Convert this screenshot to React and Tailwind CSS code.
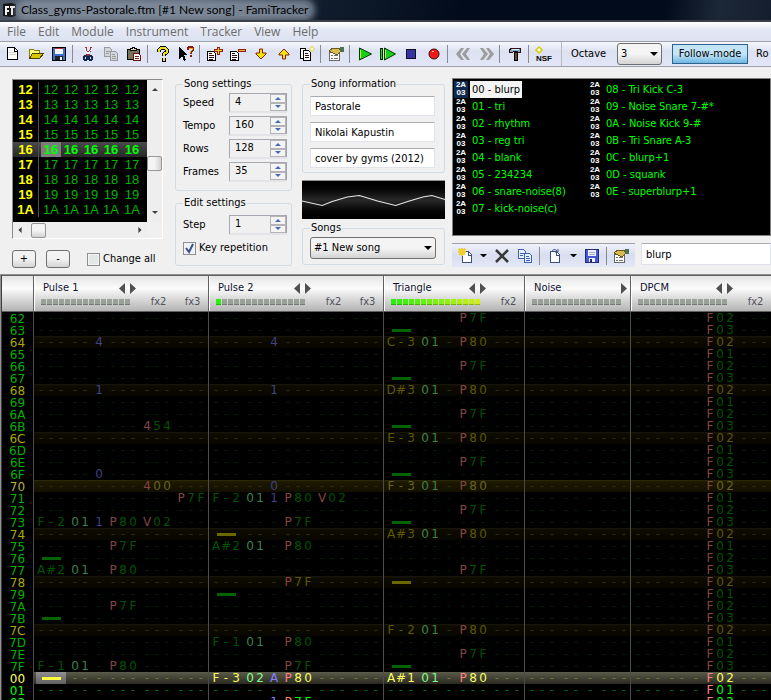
import React from "react";
import clsx from "clsx";

const MENU = ["File", "Edit", "Module", "Instrument", "Tracker", "View", "Help"];

/* ---------- toolbar icons ---------- */

const Icon = ({ children }) => (
  <svg width="16" height="16" viewBox="0 0 16 16" fill="none" shapeRendering="crispEdges" aria-hidden="true">
    {children}
  </svg>
);

const NewIcon = () => (
  <Icon>
    <path d="M2.5 1.5h7l3 3v9h-10z" fill="#fff" stroke="#000" />
    <path d="M9.5 2v3h3" stroke="#000" />
    <path d="M4 6.5h7M4 8.5h7" stroke="#d8d8c8" />
  </Icon>
);

const OpenIcon = () => (
  <Icon>
    <path d="M1.5 12.5v-9h4l1 1h5v3" fill="#ffff80" stroke="#808000" />
    <path d="M1.5 12.5l3-5h11l-4 5z" fill="#d8c800" stroke="#4a4000" />
  </Icon>
);

const SaveIcon = () => (
  <Icon>
    <path d="M1.5 1.5h13v13h-13z" fill="#3a6fd0" stroke="#000" />
    <path d="M4 2h8v6H4z" fill="#f4f4f4" />
    <path d="M4 2h8v1H4z" fill="#c03030" />
    <path d="M4 10h8v4H4z" fill="#222" />
    <path d="M9 11h2v3H9z" fill="#fff" />
  </Icon>
);

const CutIcon = () => (
  <Icon>
    <path d="M5.5 1v3l4 6M10.5 1v3l-4 6" stroke="#a03030" strokeWidth="2" />
    <path d="M5 2v2l3 4M11 2v2L8 8" stroke="#fff" />
    <circle cx="5.5" cy="12" r="2" stroke="#102850" strokeWidth="2" />
    <circle cx="10.5" cy="12" r="2" stroke="#102850" strokeWidth="2" />
  </Icon>
);

const CopyIcon = ({ line = "#9a9a9a", fill = "#d4d6de" }) => (
  <Icon>
    <path d="M1.5 1.5h5l2 2v7h-7z" fill={fill} stroke={line} />
    <path d="M3 5.5h4M3 7.5h3" stroke={line} />
    <path d="M7.5 5.5h5l2 2v7h-7z" fill={fill} stroke={line} />
    <path d="M9 8.5h3M9 10.5h4M9 12.5h4" stroke={line} />
  </Icon>
);

const PasteIcon = () => (
  <Icon>
    <path d="M1.5 3.5h12v10h-12z" fill="#77745c" stroke="#000" />
    <path d="M4.5 4.5v-2h2v-1h2v1h2v2z" fill="#e0e0a0" stroke="#000" />
    <path d="M7.5 7.5h5l2 2v5h-7z" fill="#fff" stroke="#701010" />
    <path d="M9 10.5h4M9 12.5h4" stroke="#802020" />
  </Icon>
);

const HelpIcon = () => (
  <Icon>
    <path d="M4 6V4l2-2h4l2 2v2L9 8v2" stroke="#000" strokeWidth="4" />
    <path d="M4 6V4l2-2h4l2 2v2L9 8v2" stroke="#f0e020" strokeWidth="2" />
    <path d="M7 12h4v4H7z" fill="#000" />
    <path d="M8 12h2v3H8z" fill="#f0e020" />
  </Icon>
);

const ContextHelpIcon = () => (
  <Icon>
    <path d="M1 1v12l3-3 2 5 2-1-2-5h4z" fill="#000" />
    <path d="M10 4V2l1-1h3l1 1v2l-2 2v2M13 9v2" stroke="#802010" strokeWidth="2" />
    <path d="M11 3V2h3v2l-2 2v1" stroke="#f0a030" />
  </Icon>
);

const FrameIcon = ({ minus }) => (
  <Icon>
    <path d="M.5 5.5h6l2 2v7h-8z" fill="#fff" stroke="#000" />
    <path d="M2 7.5h3M2 9.5h5M2 11.5h5M2 13.5h4" stroke="#301010" />
    {minus ? (
      <path d="M8.5 3.5h7v2h-7z" fill="#f0b020" stroke="#902010" />
    ) : (
      <path d="M10.5 1.5h2v2h3v2h-3v3h-2v-3h-3v-2h3z" fill="#f0d020" stroke="#902010" />
    )}
  </Icon>
);

const ArrowIcon = ({ up }) => (
  <Icon>
    <path
      d={up ? "M8 3l5 5v1H9.5v4h-3V9H3V8z" : "M8 13l5-5V7H9.5V3h-3v4H3v1z"}
      fill="#f4e400"
      stroke="#802010"
      shapeRendering="auto"
    />
  </Icon>
);

const DuplicateIcon = () => (
  <Icon>
    <path d="M1.5 2.5h5v10h-5z" fill="#fff" stroke="#000" />
    <path d="M4.5 4.5h5l2 2v8h-7z" fill="#fff" stroke="#000" />
    <path d="M6 7.5h3M6 9.5h4M6 11.5h4" stroke="#301010" />
    <path d="M13 .5L15.500 3 13 5.500 10.500 3z" fill="#fff" stroke="#d8cc00" shapeRendering="auto" />
  </Icon>
);

const PropertiesIcon = () => (
  <Icon>
    <path d="M1.5 6.5h10v8h-10z" fill="#fff" stroke="#686868" />
    <path d="M3 9.5h2M6 9.5h4M3 12.5h2M6 12.5h4" stroke="#707070" />
    <path d="M1 5l4-3h6l2 3-3 3H7l-2-1z" fill="#d8bc50" stroke="#6a5a20" />
    <path d="M12 1h4v5h-4z" fill="#4c7050" />
  </Icon>
);

const PlayIcon = ({ bar }) => (
  <Icon>
    {bar && <path d="M.5 2.5h2v11h-2z" fill="#20d820" stroke="#003000" />}
    <path d={bar ? "M4.5 2v12L15.5 8z" : "M2.5 2v12L14.5 8z"} fill="#18d018" stroke="#003800" shapeRendering="auto" />
    <path d={bar ? "M5.5 4v8" : "M3.5 4v8"} stroke="#c0f040" />
  </Icon>
);

const StopIcon = () => (
  <Icon>
    <path d="M3.5 3.5h9v9h-9z" fill="#3434a4" stroke="#101020" />
  </Icon>
);

const RecordIcon = () => (
  <Icon>
    <circle cx="8" cy="8" r="5" fill="#f01818" stroke="#400808" shapeRendering="auto" />
    <path d="M6 5h2v1H6z" fill="#ffb0b0" />
  </Icon>
);

const SkipIcon = ({ back }) => (
  <Icon>
    <path
      d="M2 2h3l5 6-5 6H2l4-6zM8 2h3l5 6-5 6H8l4-6z"
      fill="#9c9c9c"
      transform={back ? "matrix(-1 0 0 1 17 0)" : undefined}
      shapeRendering="auto"
    />
  </Icon>
);

const HammerIcon = () => (
  <Icon>
    <path d="M2.5 3.5l2-1h9v4h-3v-1h-4l-1 1h-3z" fill="#7ba8cc" stroke="#301010" />
    <path d="M7.5 6.5h3v8h-3z" fill="#704030" stroke="#000" />
    <path d="M5 3.5h7" stroke="#e0f0ff" />
  </Icon>
);

const NsfIcon = () => (
  <svg width="18" height="16" viewBox="0 0 18 16" fill="none" aria-hidden="true">
    <path d="M4 1l3 3-3 3-3-3z" fill="#fff" stroke="#d8cc00" strokeWidth="1.5" />
    <text x="1" y="15" fontFamily="Liberation Sans" fontSize="8" fontWeight="bold" fill="#000">
      NSF
    </text>
  </svg>
);

const PageIcon = ({ mark }) => (
  <Icon>
    <path d="M4.5 3.5h6l3 3v8h-9z" fill="#fff" stroke="#3a5078" />
    <path d="M10.5 4v3h3" stroke="#3a5078" />
    {mark === "new" ? (
      <path d="M4 0v8M0 4h8M1 1l6 6M7 1L1 7" stroke="#f0d030" strokeWidth="1.5" />
    ) : (
      <path d="M6 4c0-3 4-3 5-1M12 1v3H9" stroke="#3a5078" shapeRendering="auto" />
    )}
  </Icon>
);

const DeleteIcon = () => (
  <Icon>
    <path d="M2 2l12 12M14 2L2 14" stroke="#383838" strokeWidth="2.5" shapeRendering="auto" />
  </Icon>
);

const FloppyIcon = () => (
  <Icon>
    <path d="M1.5 1.5h13v13h-13z" fill="#4858d0" stroke="#202878" />
    <path d="M4 2h8v6H4zM5 10h6v4H5z" fill="#f0f2ff" />
    <path d="M6 11h2v3H6z" fill="#202878" />
    <path d="M5 4h6M5 6h6" stroke="#a0a8d0" />
  </Icon>
);

const Triangle = ({ dir, className }) => {
  const paths = { up: "M0 4h8L4 0z", down: "M0 0h8L4 4z" };
  return (
    <svg viewBox="0 0 8 4" className={clsx("shrink-0", className)} fill="currentColor" aria-hidden="true">
      <path d={paths[dir]} />
    </svg>
  );
};

const SideTriangle = ({ left, className }) => (
  <svg viewBox="0 0 6 11" className={clsx("shrink-0", className)} fill="currentColor" aria-hidden="true">
    <path d={left ? "M6 0v11L0 5.5z" : "M0 0v11l6-5.5z"} />
  </svg>
);

/* ---------- title, menu, toolbar ---------- */

const TitleBar = () => (
  <header className="flex h-[22px] shrink-0 items-center gap-1 overflow-hidden border-b-2 border-[#3c4048] bg-[linear-gradient(100deg,#4c5868_0%,#4c5868_25%,#101c2c_42%,#020b1b_60%,#020b1b_86%,#1c2738_93%,#141e2e_100%)] pl-[3px]">
    <svg width="13" height="14" viewBox="0 0 13 14" aria-hidden="true">
      <path d="M0 1l8-1 5 1v12l-5 1-8-1z" fill="#151515" />
      <path d="M2 3h4v2H4v2h2v2H4v3H2zM7 3h5v2h-2v7H8V5H7z" fill="#f4f4f4" />
    </svg>
    <h1 className="rounded-full bg-[#8793a2]/80 px-px font-[Lato,sans-serif] text-[12px] leading-3 text-black shadow-[0_0_6px_5px_rgba(135,147,162,0.8)]">
      Class_gyms-Pastorale.ftm [#1 New song] - FamiTracker
    </h1>
  </header>
);

const MenuBar = () => (
  <nav className="flex h-5 shrink-0 items-center gap-3 border-b border-[#a0a0a8] bg-linear-to-b from-white via-[#e4e8f4] via-40% to-[#dde2f2] pl-[7px] font-['Open_Sans',sans-serif] text-[12px] text-[#6d6d6d]">
    {MENU.map((item) => (
      <button key={item} className="leading-4">
        {item}
      </button>
    ))}
  </nav>
);

const TOOLS = [
  [["New", <NewIcon />], ["Open", <OpenIcon />], ["Save", <SaveIcon />]],
  [["Cut", <CutIcon />], ["Copy", <CopyIcon />], ["Paste", <PasteIcon />]],
  [["About", <HelpIcon />], ["Context help", <ContextHelpIcon />]],
  [
    ["Insert frame", <FrameIcon />],
    ["Remove frame", <FrameIcon minus />],
    ["Move frame down", <ArrowIcon />],
    ["Move frame up", <ArrowIcon up />],
    ["Duplicate frame", <DuplicateIcon />],
  ],
  [["Module properties", <PropertiesIcon />]],
  [
    ["Play", <PlayIcon />],
    ["Play from start", <PlayIcon bar />],
    ["Stop", <StopIcon />],
    ["Record", <RecordIcon />],
  ],
  [["Previous song", <SkipIcon back />], ["Next song", <SkipIcon />]],
  [["Settings", <HammerIcon />]],
  [["Create NSF", <NsfIcon />]],
];

const Dropdown = ({ id, label, value, className }) => (
  <div className={clsx("relative", className)}>
    <select
      id={id}
      aria-label={label}
      defaultValue={value}
      className="block h-[22px] w-full appearance-none rounded-[3px] border border-[#707070] bg-linear-to-b from-[#f4f4f4] from-50% to-[#d4d4d4] pl-[3px] text-black"
    >
      <option>{value}</option>
    </select>
    <Triangle dir="down" className="pointer-events-none absolute top-[9px] right-1 w-[8px] text-black" />
  </div>
);

const Toolbar = () => (
  <div className="flex h-[25px] shrink-0 items-center overflow-hidden border-b border-[#a0a0a8] bg-linear-to-b from-[#f6f7fc] via-[#dce1f1] via-40% to-[#e2e6f6] pl-px">
    {TOOLS.map((group, i) => (
      <React.Fragment key={i}>
        {i > 0 && <span className="mx-[2px] h-[18px] w-[2px] shrink-0 border-l border-[#8a8a92]" />}
        {group.map(([name, icon]) => (
          <button key={name} aria-label={name} className="flex w-[23px] shrink-0 items-center justify-center">
            {icon}
          </button>
        ))}
      </React.Fragment>
    ))}
    <span className="ml-[6px] h-6 shrink-0 border-l border-[#b8b8c0]" />
    <label htmlFor="octave" className="ml-[9px] w-[46px] shrink-0">
      Octave
    </label>
    <Dropdown id="octave" value="3" className="w-[45px] shrink-0" />
    <button className="ml-[10px] h-5 w-[76px] shrink-0 border border-[#2c628b] bg-linear-to-b from-[#c4e5f6] from-50% to-[#6db6e2] leading-4">
      Follow-mode
    </button>
    <span className="ml-2">Ro</span>
  </div>
);

/* ---------- frame list ---------- */

const FRAMES = ["12", "13", "14", "15", "16", "17", "18", "19", "1A"];
const FRAME_CELLS = ["w-[22px] pl-[2px]", "w-[20px]", "w-[20px]", "w-[20px]", "pr-[4px]"];

const FrameEditor = () => (
  <section className="w-[151px] shrink-0 pt-3">
    <div className="flex border-t border-l border-[#8c8c8c] border-r border-b border-r-white border-b-white">
      <div className="grow">
        <div className="bg-black pt-[2px] pb-[5px]">
          <table className="w-full table-fixed border-separate border-spacing-0 font-['Liberation_Sans',sans-serif] text-[13px] leading-[15px]">
            <tbody>
              {FRAMES.map((frame) => {
                const current = frame === "16";
                return (
                  <tr key={frame} className={current ? "bg-linear-to-b from-[#4a4a4a] to-[#282828]" : ""}>
                    <th className="w-[26px] border-r border-[#505050] p-0 text-center font-bold text-[#ffff00]">{frame}</th>
                    {FRAME_CELLS.map((cell, ch) => (
                      <td
                        key={ch}
                        className={clsx(
                          "py-0 text-center",
                          cell,
                          current ? "font-bold text-[#00ff00]" : "text-[#00b400]"
                        )}
                      >
                        <span className={clsx("block", current && ch === 0 && "bg-[#7c7c7c]")}>{frame}</span>
                      </td>
                    ))}
                  </tr>
                );
              })}
            </tbody>
          </table>
        </div>
        <div className="flex h-4 items-center bg-[#eeeeee] px-[5px] text-[#404040]">
          <SideTriangle left className="h-[6px] w-1" />
          <span className="ml-[9px] h-[15px] w-[15px] rounded-[2px] border border-[#979797] bg-linear-to-b from-[#f4f4f4] from-50% to-[#d2d2d2]" />
          <SideTriangle className="ml-auto h-[6px] w-1" />
        </div>
      </div>
      <div className="mb-4 flex w-[17px] flex-col items-center bg-[#eeeeee] py-2 text-[#404040]">
        <Triangle dir="up" className="w-[6px]" />
        <span className="mt-[65px] h-[15px] w-[15px] rounded-[2px] border border-[#979797] bg-linear-to-r from-[#f4f4f4] from-50% to-[#d2d2d2]" />
        <Triangle dir="down" className="mt-auto w-[6px]" />
      </div>
    </div>
    <div className="mt-[11px] flex items-center">
      {["+", "-"].map((sign) => (
        <button
          key={sign}
          className="mr-[10px] h-[18px] w-6 rounded-[3px] border border-[#707070] bg-linear-to-b from-[#f2f2f2] from-50% to-[#d4d4d4] leading-4"
        >
          {sign}
        </button>
      ))}
      <label className="ml-[7px] flex items-center gap-[3px] whitespace-nowrap">
        <input
          type="checkbox"
          className="h-[13px] w-[13px] appearance-none border border-[#8e8f8f] bg-[#e4e6e8] shadow-[inset_0_0_0_1px_#f4f4f4]"
        />
        Change all
      </label>
    </div>
  </section>
);

/* ---------- settings ---------- */

const Group = ({ title, children, className }) => (
  <fieldset className={clsx("min-w-0 rounded-[3px] border border-[#d0dbe4] pl-[7px]", className)}>
    <legend className="px-px leading-[14px]">{title}</legend>
    {children}
  </fieldset>
);

const Spinner = ({ label, value }) => (
  <div className="flex items-center justify-between">
    <label htmlFor={label}>{label}</label>
    <div className="flex h-5 w-[58px] border-t border-b-2 border-l border-t-[#a8a8b0] border-b-[#e4e4e8] border-l-[#a8a8b0]">
      <input id={label} defaultValue={value} className="w-0 min-w-0 grow bg-transparent pl-[5px] outline-none" />
      <div className="flex w-[17px] flex-col border-r border-[#a0a0a8] text-[#4c66b4]">
        <button aria-label={label + " up"} className="flex grow items-center justify-center border border-[#b4b4b8] bg-[#f4f4f4]">
          <Triangle dir="up" className="w-[6px]" />
        </button>
        <button aria-label={label + " down"} className="flex grow items-center justify-center border border-[#b4b4b8] bg-[#f4f4f4]">
          <Triangle dir="down" className="w-[6px]" />
        </button>
      </div>
    </div>
  </div>
);

const Settings = () => (
  <section className="ml-3 flex w-[117px] shrink-0 flex-col gap-[5px] pt-[10px]">
    <Group title="Song settings" className="pr-1 pb-2">
      <div className="flex flex-col gap-[3px] pt-[2px]">
        <Spinner label="Speed" value="4" />
        <Spinner label="Tempo" value="160" />
        <Spinner label="Rows" value="128" />
        <Spinner label="Frames" value="35" />
      </div>
    </Group>
    <Group title="Edit settings" className="pr-1 pb-[10px]">
      <div className="pt-[5px]">
        <Spinner label="Step" value="1" />
      </div>
      <label className="mt-[6px] flex items-center gap-[3px] whitespace-nowrap leading-[14px]">
        <span className="relative block h-[13px] w-[13px]">
          <input type="checkbox" defaultChecked className="block h-[13px] w-[13px] appearance-none border border-[#8e8f8f] bg-[#f0f2f6]" />
          <svg viewBox="0 0 13 13" className="pointer-events-none absolute inset-0" fill="none" stroke="#3a4f8c" strokeWidth="2">
            <path d="M3 6l3 4 4-8" />
          </svg>
        </span>
        Key repetition
      </label>
    </Group>
  </section>
);

const SongInfo = () => (
  <section className="ml-[10px] flex w-[143px] shrink-0 flex-col pt-[10px]">
    <Group title="Song information" className="pr-[9px] pb-1">
      <div className="flex flex-col gap-[6px] pt-[5px]">
        {[
          ["Title", "Pastorale"],
          ["Author", "Nikolai Kapustin"],
          ["Copyright", "cover by gyms (2012)"],
        ].map(([label, value]) => (
          <input
            key={label}
            aria-label={label}
            defaultValue={value}
            className="h-5 w-full rounded-[1px] border border-[#e0e4ea] border-t-[#abadb3] bg-white pl-1 outline-none"
          />
        ))}
      </div>
    </Group>
    <div className="mt-[7px] mb-[2px] border-t border-[#909090] bg-linear-to-b from-black via-[#2a2a2a] to-black">
      <svg viewBox="0 0 142 38" preserveAspectRatio="none" className="block h-[38px] w-full" fill="none" stroke="#e8e8e8">
        <path d="M0 20L20 24.5L30 20.5L45 16L57 14.5L75 20L93 24.5L105 20.5L120 16L129 14.5L142 18.5" />
      </svg>
    </div>
    <Group title="Songs" className="pr-2 pb-[5px]">
      <Dropdown label="Song" value="#1 New song" className="mt-[2px]" />
    </Group>
  </section>
);

/* ---------- instruments ---------- */

const INSTRUMENTS = [
  "00 - blurp",
  "01 - tri",
  "02 - rhythm",
  "03 - reg tri",
  "04 - blank",
  "05 - 234234",
  "06 - snare-noise(8)",
  "07 - kick-noise(c)",
  "08 - Tri Kick C-3",
  "09 - Noise Snare 7-#*",
  "0A - Noise Kick 9-#",
  "0B - Tri Snare A-3",
  "0C - blurp+1",
  "0D - squank",
  "0E - superblurp+1",
];

const Instruments = () => (
  <section className="ml-[7px] min-w-0 grow pt-[11px]">
    <ul className="grid h-[158px] auto-cols-[134px] grid-flow-col grid-rows-[repeat(8,17px)] border border-[#808080] bg-black pt-[2px] pl-px">
      {INSTRUMENTS.map((name, i) => (
        <li key={name} className="flex items-center gap-[2px] whitespace-nowrap text-[#00ff00]">
          <span
            className={clsx(
              "w-[14px] pb-px text-center font-['Liberation_Sans',sans-serif] text-[8px] leading-[8px] font-bold text-white",
              i === 0 && "bg-[#0c2a50]"
            )}
          >
            2A
            <br />
            03
          </span>
          <span className={clsx("px-[2px] leading-[17px]", i === 0 && "bg-[#f4f4f4] text-black")}>{name}</span>
        </li>
      ))}
    </ul>
    <div className="mt-[7px] flex items-start gap-[6px]">
      <div className="flex h-6 w-[183px] shrink-0 items-center border-t border-[#a0a0a8] bg-linear-to-b from-[#f0f2fa] via-[#d8def0] via-50% to-[#e4e8f6] pl-[6px]">
        <button aria-label="New instrument"><PageIcon mark="new" /></button>
        <Triangle dir="down" className="ml-[6px] w-[7px]" />
        <button aria-label="Remove instrument" className="ml-[7px]"><DeleteIcon /></button>
        <button aria-label="Clone instrument" className="ml-[7px]"><CopyIcon line="#3c64b4" fill="#e8f0ff" /></button>
        <span className="mx-[6px] h-[18px] border-l border-[#8a8a92]" />
        <button aria-label="Load instrument"><PageIcon mark="load" /></button>
        <Triangle dir="down" className="ml-2 w-[7px]" />
        <button aria-label="Save instrument" className="ml-[7px]"><FloppyIcon /></button>
        <span className="mx-[6px] h-[18px] border-l border-[#8a8a92]" />
        <button aria-label="Edit instrument"><PropertiesIcon /></button>
      </div>
      <input
        aria-label="Instrument name"
        defaultValue="blurp"
        className="h-[22px] min-w-0 grow border border-[#e0e4ea] border-t-[#abadb3] bg-white pl-1 outline-none"
      />
    </div>
  </section>
);

/* ---------- pattern editor ---------- */

const CHANNELS = [
  { name: "Pulse 1", fx: 3, level: 0, left: true, width: "w-[175px]" },
  { name: "Pulse 2", fx: 3, level: 1, left: true, width: "w-[175px]" },
  { name: "Triangle", fx: 2, level: 15, left: true, width: "w-[141px]" },
  { name: "Noise", fx: 1, level: 0, left: false, width: "w-[107px]" },
  { name: "DPCM", fx: 2, level: 0, left: true, width: "w-[141px]" },
];

// note, instrument, volume, effects; "=" is a note cut
const PATTERN = [
  {
    "64": "--- -- 4",
    "68": "--- -- 1",
    "6B": "--- -- - --- 454",
    "6F": "--- -- 0",
    "70": "--- -- - --- 400",
    "71": "--- -- - --- --- P7F",
    "73": "F-2 01 1 P80 V02",
    "75": "--- -- - P7F",
    "76": "=",
    "77": "A#2 01 - P80",
    "7A": "--- -- - P7F",
    "7B": "=",
    "7F": "F-1 01 - P80",
    "00": "=",
  },
  {
    "64": "--- -- 4",
    "68": "--- -- 1",
    "70": "--- -- 0",
    "71": "F-2 01 1 P80 V02",
    "73": "--- -- - P7F",
    "74": "=",
    "75": "A#2 01 - P80",
    "78": "--- -- - P7F",
    "79": "=",
    "7D": "F-1 01 - P80",
    "7F": "--- -- - P7F",
    "00": "F-3 02 A P80",
    "02": "--- -- 1 P7F",
  },
  {
    "62": "--- -- - P7F",
    "63": "=",
    "64": "C-3 01 - P80",
    "66": "--- -- - P7F",
    "67": "=",
    "68": "D#3 01 - P80",
    "6A": "--- -- - P7F",
    "6B": "=",
    "6C": "E-3 01 - P80",
    "6E": "--- -- - P7F",
    "6F": "=",
    "70": "F-3 01 - P80",
    "72": "--- -- - P7F",
    "73": "=",
    "74": "A#3 01 - P80",
    "77": "--- -- - P7F",
    "78": "=",
    "7C": "F-2 01 - P80",
    "7E": "--- -- - P7F",
    "7F": "=",
    "00": "A#1 01 - P80",
  },
  {},
];

const DPCM_SPEED = ["F02", "F01", "F02", "F03"];
const FIRST_ROW = 0x62;
const ROWS = Array.from({ length: 33 }, (_, i) => (FIRST_ROW + i) % 128);

const rowColors = (row, dim) => {
  const beat = row % 4 === 0;
  if (dim) {
    return {
      number: beat ? (row % 16 === 0 ? "text-[#b4b440]" : "text-[#a8a800]") : "text-[#00b000]",
      note: beat ? (row % 16 === 0 ? "text-[#686420]" : "text-[#5c5800]") : "text-[#005400]",
      dash: beat ? "text-[#302c06]" : "text-[#002006]",
      cut: beat ? "bg-[#6c6800]" : "bg-[#006400]",
      inst: "text-[#408048]",
      vol: "text-[#404084]",
      fx: "text-[#844444]",
    };
  }
  return {
    number: beat ? "text-[#ffff60]" : "text-[#00ff00]",
    note: beat ? "text-[#ffff60]" : "text-[#00ff00]",
    dash: beat ? "text-[#707038]" : "text-[#006418]",
    cut: "bg-[#ffff40]",
    inst: "text-[#80ff80]",
    vol: "text-[#8080ff]",
    fx: "text-[#ff8080]",
  };
};

const rowBackground = (row, dim) => {
  if (!dim && row === 0) return "bg-linear-to-b from-[#5c5c4c] to-[#2a2a20]";
  if (row % 16 === 0) return "bg-linear-to-b from-[#2a2608] from-5% via-[#1c1800] via-15% to-[#120f00]";
  if (row % 4 === 0) return "bg-linear-to-b from-[#17150a] from-5% via-[#0e0c00] via-15% to-[#070600]";
  return "";
};

const Field = ({ text, kind, colors }) => (
  <span className="flex">
    {[...text].map((char, i) => {
      const empty = /^-+$/.test(text);
      const color = empty ? colors.dash : kind === "fx" && i > 0 ? colors.note : colors[kind];
      return (
        <span key={i} className={clsx("w-[10px] text-center", color)}>
          {char}
        </span>
      );
    })}
  </span>
);

const ChannelRow = ({ entry = "", fx, colors, cursor }) => {
  const [note, inst = "--", vol = "-", ...effects] = entry ? entry.split(" ") : ["---"];
  return (
    <div className="flex h-3 gap-1 overflow-hidden pl-[2px]">
      {note === "=" ? (
        <span
          className={clsx(
            "flex h-3 w-[30px] items-center justify-center",
            cursor && "bg-linear-to-b from-[#909090] to-[#606060]"
          )}
        >
          <span className={clsx("h-[3px] w-[19px]", colors.cut)} />
        </span>
      ) : (
        <Field text={note} kind="note" colors={colors} />
      )}
      <Field text={inst} kind="inst" colors={colors} />
      <Field text={vol} kind="vol" colors={colors} />
      {Array.from({ length: fx }, (_, i) => (
        <Field key={i} text={effects[i] || "---"} kind="fx" colors={colors} />
      ))}
    </div>
  );
};

const Meter = ({ level }) => (
  <span className="flex w-[90px] shrink-0 gap-px">
    {Array.from({ length: 15 }, (_, i) => (
      <span
        key={i}
        className="h-[6px] w-[5px] border-b border-black/25 bg-[#98a098]"
        style={i < level ? { backgroundColor: `hsl(${112 - i * 3} 90% 50%)` } : undefined}
      />
    ))}
  </span>
);

const PatternEditor = () => (
  <main className="min-h-0 grow overflow-hidden border-t border-l border-[#909090] bg-black">
    <table className="border-separate border-spacing-0 border-l border-[#404040]">
      <thead>
        <tr>
          <th className="w-[31px] min-w-[31px] border-y border-[#606060] bg-linear-to-b from-[#e4e4e4] via-[#fcfcfc] via-35% to-[#b4b4b4] p-0" />
          {CHANNELS.map((channel) => (
            <th
              key={channel.name}
              className={clsx(
                "border-y border-l border-[#606060] bg-linear-to-b from-[#e4e4e4] via-[#fcfcfc] via-35% to-[#b4b4b4] p-0 text-left font-normal",
                channel.width
              )}
            >
              <div className="flex h-[35px] flex-col border-l border-white pt-[5px] pl-[6px]">
                <div className="flex h-[14px] items-center text-[#505050]">
                  <span className="w-[78px] pl-[2px] text-[#101030]">{channel.name}</span>
                  <SideTriangle left className={clsx("h-[11px] w-[6px]", !channel.left && "invisible")} />
                  <SideTriangle className="ml-[5px] h-[11px] w-[6px]" />
                </div>
                <div className="flex h-[14px] items-center text-[#505058]">
                  <Meter level={channel.level} />
                  {channel.fx > 1 && <span className="ml-[9px] w-[34px] pl-[3px] text-center">fx2</span>}
                  {channel.fx > 2 && <span className="w-[34px] pl-[3px] text-center">fx3</span>}
                </div>
              </div>
            </th>
          ))}
        </tr>
      </thead>
      <tbody className="font-['DejaVu_Sans',sans-serif] text-[12px] leading-3">
        {ROWS.map((row, i) => {
          const name = row.toString(16).toUpperCase().padStart(2, "0");
          const dim = i < 30;
          const colors = rowColors(row, dim);
          return (
            <tr key={name}>
              <th className={clsx("p-0 text-center font-normal", colors.number)}>
                <div className="h-3 leading-[14px]">{name}</div>
              </th>
              {CHANNELS.map((channel, c) => (
                <td key={channel.name} className={clsx("border-l border-l-[#4c4c4c] p-0", rowBackground(row, dim))}>
                  <ChannelRow
                    entry={c === 4 ? `--- -- - ${DPCM_SPEED[row % 4]}` : PATTERN[c][name]}
                    fx={channel.fx}
                    colors={colors}
                    cursor={c === 0 && name === "00"}
                  />
                </td>
              ))}
            </tr>
          );
        })}
      </tbody>
    </table>
  </main>
);

export default function App() {
  return (
    <div className="flex h-screen flex-col overflow-hidden bg-[#f0f0f0] font-['DejaVu_Sans_Condensed','DejaVu_Sans',sans-serif] text-[11px] text-black">
      <TitleBar />
      <MenuBar />
      <Toolbar />
      <div className="flex h-[207px] shrink-0 pl-3">
        <FrameEditor />
        <Settings />
        <SongInfo />
        <Instruments />
      </div>
      <PatternEditor />
    </div>
  );
}
